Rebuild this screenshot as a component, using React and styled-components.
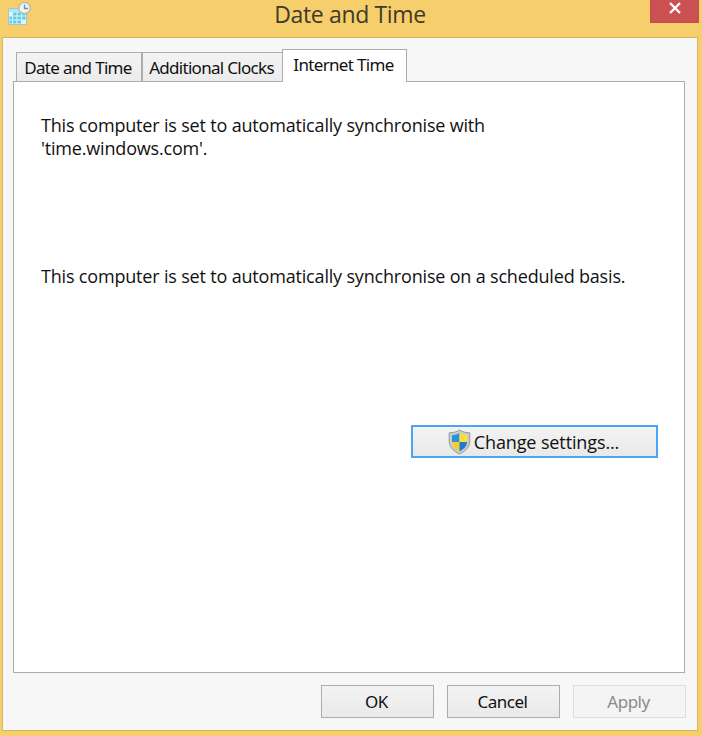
import React from 'react'
import styled, { createGlobalStyle } from 'styled-components'

const App = () => (
    <Window>
        <GlobalStyle />
        <TitleBar>
            <CalendarIcon />
            <Title>Date and Time</Title>
            <Close aria-label="Close">
                <svg width="14" height="12" viewBox="0 0 14 12">
                    <path d="M2 1 L12 11 M12 1 L2 11" stroke="#fff" strokeWidth="2.3" />
                </svg>
            </Close>
        </TitleBar>
        <Client>
            <Tabs>
                <Tab $width={126} $spacing="-0.68px">Date and Time</Tab>
                <Tab $width={140} $spacing="-0.7px" $joined>Additional Clocks</Tab>
                <ActiveTab $width={125} $spacing="-0.66px">Internet Time</ActiveTab>
            </Tabs>
            <Panel>
                <Text>This computer is set to automatically synchronise with<br />'time.windows.com'.</Text>
                <Schedule>This computer is set to automatically synchronise on a scheduled basis.</Schedule>
                <SettingsButton>
                    <ShieldIcon />
                    Change settings...
                </SettingsButton>
            </Panel>
            <Footer>
                <Button>OK</Button>
                <Button>Cancel</Button>
                <Button disabled>Apply</Button>
            </Footer>
        </Client>
    </Window>
)

const CalendarIcon = () => (
    <svg width="26" height="26" viewBox="0 0 26 26">
        <path d="M1.5 8.5h18v16h-18z" fill="#d9f6fb" stroke="#a9c6c2" />
        <path d="M2 9h17v3H2z" fill="#b4e4ec" />
        <path d="M6 12.5h3.5v3H6zM10.5 12.5H14v3h-3.5zM15 12.5h3.5v3H15zM2.5 16.5H5v3H2.5zM6 16.5h3.5v3H6zM10.5 16.5H14v3h-3.5zM15 16.5h3.5v3H15zM2.5 20.5H5v3H2.5zM6 20.5h3.5v3H6zM10.5 20.5H14v3h-3.5z" fill="#62cbe9" />
        <circle cx="17.5" cy="8" r="5.7" fill="#edf2f2" stroke="#b8b9ad" strokeWidth="1.3" />
        <path d="M17.5 4.5V8.5H21" fill="none" stroke="#7b919d" strokeWidth="1.3" />
    </svg>
)

const ShieldIcon = () => (
    <svg width="23" height="26" viewBox="0 0 23 26">
        <path d="M11.5 1C8.5 3 5 3.8 1.2 3.8V12c0 6 4 10 10.3 13 6.3-3 10.3-7 10.3-13V3.8C18 3.8 14.5 3 11.5 1z" fill="#c9cccc" stroke="#969b9c" />
        <path d="M11.5 4C9 5.4 6.8 6 4 6.2V13h7.5z" fill="#2d91dc" />
        <path d="M11.5 4c2.5 1.4 4.7 2 7.5 2.2V13h-7.5z" fill="#ffdf32" />
        <path d="M4 13c.3 4.3 3 7 7.5 9.3V13z" fill="#f7cf25" />
        <path d="M19 13c-.3 4.3-3 7-7.5 9.3V13z" fill="#1f7bd0" />
    </svg>
)

const GlobalStyle = createGlobalStyle`
    * {
        box-sizing: border-box;
    }

    body {
        margin: 0;
    }
`
const Window = styled.div`
    width: 702px;
    height: 736px;
    padding: 0 4px 4px 2px;
    background: #f7ce6c;
    font-family: "Noto Sans", "Open Sans", sans-serif;
    font-size: 18px;
    color: #111;
`
const TitleBar = styled.header`
    display: grid;
    grid-template-columns: 43px 1fr 48px;
    align-items: start;
    height: 37px;
    padding: 0 0 0 5px;
`
const Title = styled.h1`
    margin: 0;
    font-family: "Open Sans", sans-serif;
    font-size: 23px;
    line-height: 28px;
    font-weight: 400;
    letter-spacing: -.35px;
    text-align: center;
    color: #3f3a2a;
`
const Close = styled.button`
    display: flex;
    justify-content: center;
    width: 49px;
    height: 23px;
    padding: 2px 0 0;
    border: 1px solid #c2504a;
    border-top: 0;
    background: #cb5052;
`
const Client = styled.main`
    height: 694px;
    padding: 11px 12px 0 10px;
    border: 1px solid #d9b361;
    background: #f7f7f7;
`
const Tabs = styled.nav`
    display: flex;
    align-items: flex-end;
    height: 33px;
    padding-left: 3px;
    margin-bottom: -1px;
    position: relative;
`
const Tab = styled.div`
    width: ${props => props.$width}px;
    height: 30px;
    padding-right: 2px;
    border: 1px solid #acacac;
    border-right-width: ${props => props.$joined ? 0 : 1}px;
    background: linear-gradient(#f3f3f3, #ececec);
    font-size: 17px;
    line-height: 30px;
    letter-spacing: ${props => props.$spacing};
    text-align: center;
    white-space: nowrap;
`
const ActiveTab = styled(Tab)`
    height: 33px;
    border-bottom: 0;
    background: #fff;
`
const Panel = styled.section`
    display: flex;
    flex-direction: column;
    height: 592px;
    padding: 32px 26px 0 27px;
    border: 1px solid #acacac;
    background: #fff;
`
const Text = styled.p`
    margin: 0;
    font-family: "Open Sans", sans-serif;
    line-height: 23px;
    letter-spacing: -.18px;
    white-space: nowrap;
`
const Schedule = styled(Text)`
    margin-top: 105px;
`
const Button = styled.button`
    width: 113px;
    height: 33px;
    padding: 0 2px 0 0;
    border: 1px solid ${props => props.disabled ? '#dedede' : '#acacac'};
    background: ${props => props.disabled ? '#f4f4f4' : 'linear-gradient(#f3f3f3, #e9e9e9)'};
    font: inherit;
    font-size: 17px;
    letter-spacing: -.5px;
    color: ${props => props.disabled ? '#8b8b8b' : '#111'};
`
const SettingsButton = styled(Button)`
    display: flex;
    align-items: center;
    justify-content: center;
    gap: 3px;
    align-self: flex-end;
    width: 247px;
    margin-top: 137px;
    border: 2px solid #4ba4f5;
    font-family: "Open Sans", sans-serif;
    font-size: 18px;
    letter-spacing: -.12px;
`
const Footer = styled.footer`
    display: flex;
    justify-content: flex-end;
    gap: 13px;
    margin: 12px -1px 0 0;
`
export default App
